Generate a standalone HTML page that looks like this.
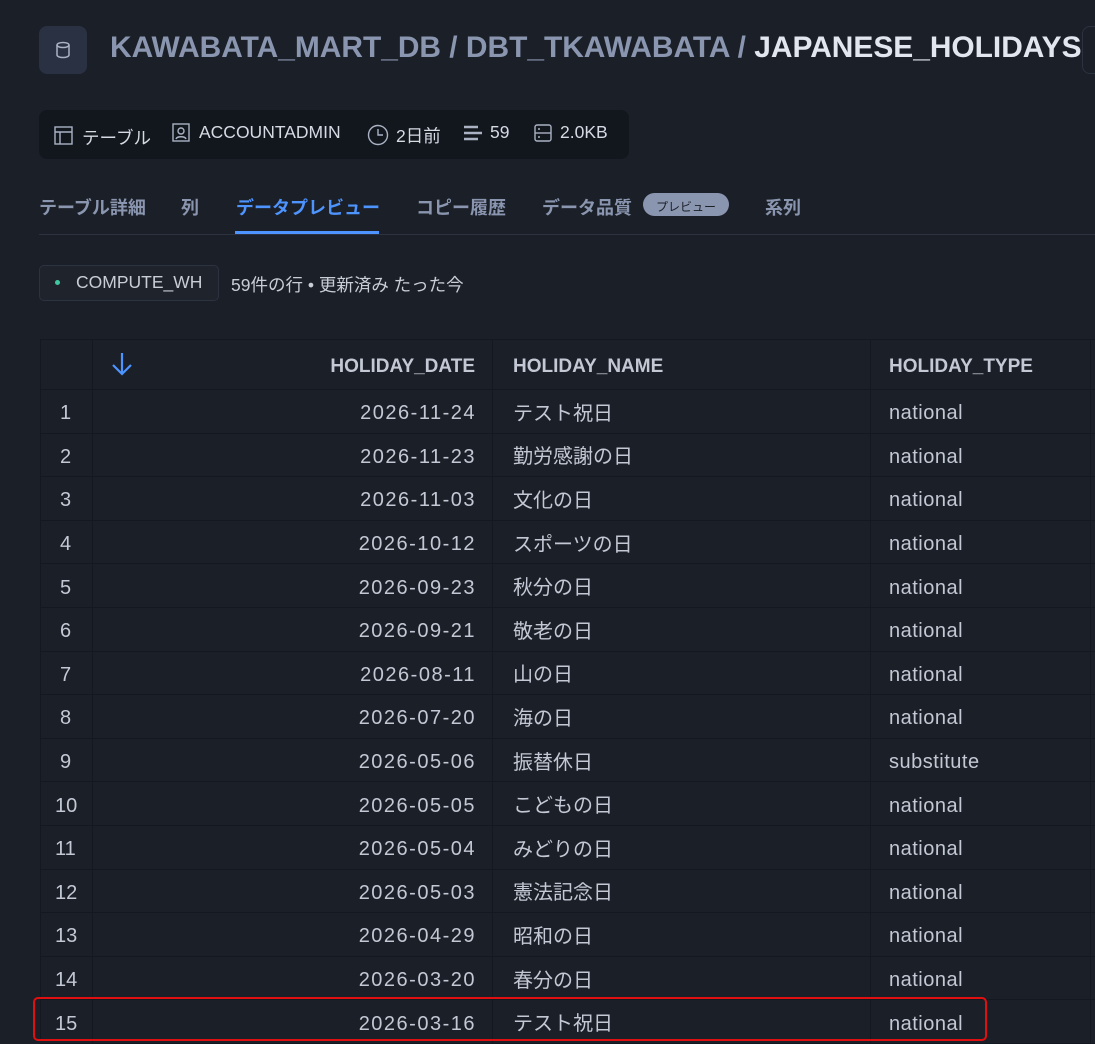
<!DOCTYPE html>
<html><head><meta charset="utf-8"><style>
body{margin:0;width:1095px;height:1043px;overflow:hidden;background:#1b1f27;font-family:"Liberation Sans","Noto Sans CJK JP",sans-serif;color:#c9cdd6;position:relative}
.a{position:absolute;white-space:nowrap}
.ib{left:39px;top:26px;width:48px;height:48px;background:#2a3142;border-radius:8px}
.title{left:110px;top:31px;font-size:29.9px;font-weight:bold;color:#8a96b0}
.title b{color:#e2e6ef}
.bar{left:39px;top:110px;width:590px;height:49px;background:#12161d;border-radius:8px}
.bi{top:122px;font-size:17.5px;color:#d6dae3;display:flex;align-items:center}
.tab{top:194px;font-size:18px;font-weight:bold;color:#8a96b0}
.line{left:39px;top:234px;width:1056px;height:1px;background:#2c3240}
.row{position:absolute;left:40px;width:1055px;border-bottom:1px solid #141820}
.c{position:absolute;top:0;height:100%;display:flex;align-items:center;font-size:20px;color:#c3c8d4;box-sizing:border-box}
.l{padding-top:5px}
.dt{letter-spacing:1.5px}
</style></head><body>
<div class="a ib"><svg width="48" height="48" viewBox="0 0 48 48"><ellipse cx="24" cy="19" rx="6" ry="2.5" fill="none" stroke="#aab2c4" stroke-width="1.5"/><path d="M18 19v10c0 1.4 2.7 2.5 6 2.5s6-1.1 6-2.5V19" fill="none" stroke="#aab2c4" stroke-width="1.5"/></svg></div>
<div class="a title">KAWABATA_MART_DB / DBT_TKAWABATA / <b>JAPANESE_HOLIDAYS</b></div>
<div class="a" style="left:1082px;top:26px;width:30px;height:46px;border:1px solid #2c3240;border-radius:8px;background:#1b1f27"></div>
<div class="a bar"></div>
<div class="a bi" style="left:54px"><svg width="20" height="20"><rect x="1" y="1" width="17" height="17" fill="none" stroke="#aab2c4" stroke-width="1.4"/><path d="M1 6h17M6 6v12" stroke="#aab2c4" stroke-width="1.4"/></svg><span style="margin-left:8px;margin-top:3px">テーブル</span></div>
<div class="a bi" style="left:172px"><svg width="18" height="20"><rect x="1" y="1" width="16" height="17" fill="none" stroke="#aab2c4" stroke-width="1.4"/><circle cx="9" cy="8" r="3" fill="none" stroke="#aab2c4" stroke-width="1.4"/><path d="M4 16c1-3 9-3 10 0" stroke="#aab2c4" stroke-width="1.4" fill="none"/></svg><span style="margin-left:9px">ACCOUNTADMIN</span></div>
<div class="a bi" style="left:367px"><svg width="22" height="22"><circle cx="11" cy="11" r="9.5" fill="none" stroke="#aab2c4" stroke-width="1.4"/><path d="M11 5v6h5" stroke="#aab2c4" stroke-width="1.4" fill="none"/></svg><span style="margin-left:7px;margin-top:1px">2日前</span></div>
<div class="a bi" style="left:463px"><svg width="20" height="18"><path d="M1 3h14M1 9h18M1 15h14" stroke="#aab2c4" stroke-width="2.5"/></svg><span style="margin-left:7px">59</span></div>
<div class="a bi" style="left:534px"><svg width="18" height="18"><rect x="1" y="1" width="16" height="16" rx="2" fill="none" stroke="#aab2c4" stroke-width="1.4"/><path d="M1 9h16" stroke="#aab2c4" stroke-width="1.4"/><circle cx="5" cy="5" r="1" fill="#aab2c4"/><circle cx="5" cy="13" r="1" fill="#aab2c4"/></svg><span style="margin-left:8px">2.0KB</span></div>
<div class="a tab" style="left:39px">テーブル詳細</div>
<div class="a tab" style="left:181px">列</div>
<div class="a tab" style="left:236px;color:#4d94ff">データプレビュー</div>
<div class="a" style="left:235px;top:231px;width:144px;height:3px;background:#4d94ff"></div>
<div class="a tab" style="left:416px">コピー履歴</div>
<div class="a tab" style="left:542px">データ品質</div>
<div class="a" style="left:643px;top:193px;width:86px;height:23px;border-radius:12px;background:#8a96b0;color:#1b1f27;font-size:12px;text-align:center;line-height:29px">プレビュー</div>
<div class="a tab" style="left:765px">系列</div>
<div class="a line"></div>
<div class="a" style="left:39px;top:265px;width:178px;height:34px;border:1px solid #2c3240;border-radius:5px;background:#1e232c"></div>
<div class="a" style="left:55px;top:280px;width:5px;height:5px;border-radius:50%;background:#3fc9a0"></div>
<div class="a" style="left:76px;top:272px;font-size:17.5px;color:#c9cdd6">COMPUTE_WH</div>
<div class="a" style="left:231px;top:272px;font-size:17.5px;color:#c9cdd6">59件の行 • 更新済み たった今</div>
<div class="a" style="left:40px;top:339px;width:1055px;height:700px;background:#1b1f27;border-top:1px solid #141820;border-left:1px solid #141820"></div>
<div class="row" style="top:339px;height:50px">
<div class="c" style="left:0;width:53px;border-right:1px solid #141820"></div>
<div class="c" style="left:70px"><svg width="24" height="26"><path d="M12 2v21M3 14l9 9 9-9" stroke="#4d94ff" stroke-width="2.2" fill="none"/></svg></div>
<div class="c l" style="left:53px;width:400px;justify-content:flex-end;font-weight:bold;font-size:19px;color:#c3c8d4;border-right:1px solid #141820;padding-right:17px">HOLIDAY_DATE</div>
<div class="c l" style="left:473px;font-weight:bold;font-size:19px">HOLIDAY_NAME</div>
<div class="c" style="left:830px;width:1px;background:#141820"></div>
<div class="c l" style="left:849px;font-weight:bold;font-size:19px">HOLIDAY_TYPE</div>
<div class="c" style="left:1050px;width:1px;background:#141820"></div>
</div>
<div id="rows"></div>
<script>
var d=[["2026-11-24","テスト祝日","national"],["2026-11-23","勤労感謝の日","national"],["2026-11-03","文化の日","national"],["2026-10-12","スポーツの日","national"],["2026-09-23","秋分の日","national"],["2026-09-21","敬老の日","national"],["2026-08-11","山の日","national"],["2026-07-20","海の日","national"],["2026-05-06","振替休日","substitute"],["2026-05-05","こどもの日","national"],["2026-05-04","みどりの日","national"],["2026-05-03","憲法記念日","national"],["2026-04-29","昭和の日","national"],["2026-03-20","春分の日","national"],["2026-03-16","テスト祝日","national"]];
var h="";for(var i=0;i<d.length;i++){var t=390+i*43.6;
h+='<div class="row" style="top:'+t+'px;height:42.6px"><div class="c l" style="left:0;width:53px;border-right:1px solid #141820;padding-left:'+(i<9?20:15)+'px">'+(i+1)+'</div><div class="c l dt" style="left:53px;width:400px;justify-content:flex-end;border-right:1px solid #141820;padding-right:16px">'+d[i][0]+'</div><div class="c" style="left:473px">'+d[i][1]+'</div><div class="c" style="left:830px;width:1px;background:#141820"></div><div class="c l" style="left:849px;letter-spacing:0.5px">'+d[i][2]+'</div><div class="c" style="left:1050px;width:1px;background:#141820"></div></div>';}
document.getElementById("rows").outerHTML=h;
</script>
<div class="a" style="left:33px;top:997px;width:950px;height:40px;border:2px solid #e01010;border-radius:5px"></div>
</body></html>
